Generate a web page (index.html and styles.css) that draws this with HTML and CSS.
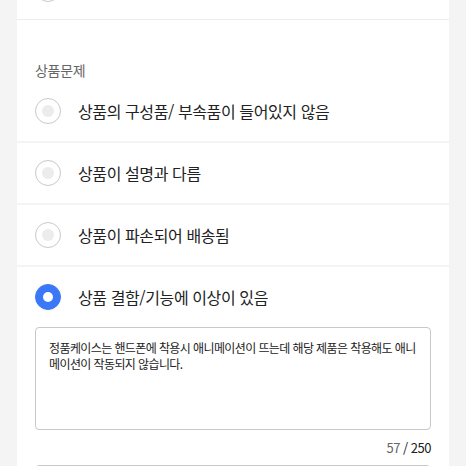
FILE: index.html
```html
<!DOCTYPE html>
<html lang="ko">
<head>
<meta charset="utf-8">
<link rel="stylesheet" href="styles.css">
</head>
<body>
<div class="panel">
  <div class="prev-row"><span class="radio prev-radio"></span></div>
  <div class="section">
    <div class="first-block">
      <div class="section-title">상품문제</div>
      <div class="option"><span class="radio"></span><span class="label">상품의 구성품/ 부속품이 들어있지 않음</span></div>
    </div>
    <div class="option"><span class="radio"></span><span class="label">상품이 설명과 다름</span></div>
    <div class="option"><span class="radio"></span><span class="label">상품이 파손되어 배송됨</span></div>
    <div class="option-block">
      <div class="option selected"><span class="radio checked"></span><span class="label">상품 결함/기능에 이상이 있음</span></div>
      <div class="textarea">정품케이스는 핸드폰에 착용시 애니메이션이 뜨는데 해당 제품은 착용해도 애니메이션이 작동되지 않습니다.</div>
      <div class="counter"><span class="count">57</span> / 250</div>
      <div class="next-box"></div>
    </div>
  </div>
</div>
</body>
</html>
```
FILE: styles.css
```css
html, body {
  margin: 0;
  padding: 0;
  background: #f4f4f4;
  height: 466px;
  overflow: hidden;
  font-family: "Noto Sans CJK KR", "Noto Sans", sans-serif;
  color: #222;
}
.panel {
  width: 432px;
  margin: 0 17px;
  display: flex;
  flex-direction: column;
}
.prev-row {
  height: 19px;
  background: #fff;
  overflow: hidden;
  padding-left: 18px;
  border-bottom: 1px solid #ececec;
}
.prev-radio {
  margin-top: -24px;
}
.section {
  display: flex;
  flex-direction: column;
  gap: 2px;
}
.first-block {
  background: #fff;
  display: flex;
  flex-direction: column;
}
.section-title {
  padding: 40px 18px 0;
  height: 21px;
  font-size: 14px;
  line-height: 20px;
  color: #666;
  letter-spacing: -0.3px;
}
.option {
  background: #fff;
  height: 60px;
  display: flex;
  align-items: center;
  padding-left: 18px;
  gap: 17px;
}
.radio {
  display: flex;
  align-items: center;
  justify-content: center;
  width: 26px;
  height: 26px;
  box-sizing: border-box;
  border: 1px solid #c9c9c9;
  border-radius: 50%;
  flex: none;
}
.radio::after {
  content: "";
  width: 12px;
  height: 12px;
  border-radius: 50%;
  background: #ececec;
}
.radio.checked {
  background: #3b78f8;
  border-color: #3b78f8;
}
.radio.checked::after {
  width: 10px;
  height: 10px;
  background: #fff;
}
.label {
  font-size: 16px;
  letter-spacing: -0.4px;
  color: #222;
}
.option-block {
  background: #fff;
  display: flex;
  flex-direction: column;
}
.textarea {
  margin: 0 18px;
  height: 103px;
  flex: none;
  box-sizing: border-box;
  border: 1px solid #c8c8c8;
  border-radius: 4px;
  padding: 12px 13px;
  font-size: 12px;
  line-height: 16px;
  letter-spacing: -0.6px;
  color: #222;
}
.counter {
  margin: 0 18px;
  text-align: right;
  font-size: 13px;
  line-height: 18px;
  padding-top: 9px;
  height: 35px;
  flex: none;
  box-sizing: border-box;
  letter-spacing: -0.5px;
  color: #222;
}
.count {
  color: #666;
}
.next-box {
  margin: 0 18px;
  height: 40px;
  flex: none;
  border: 1px solid #c8c8c8;
  border-radius: 4px;
}
```
